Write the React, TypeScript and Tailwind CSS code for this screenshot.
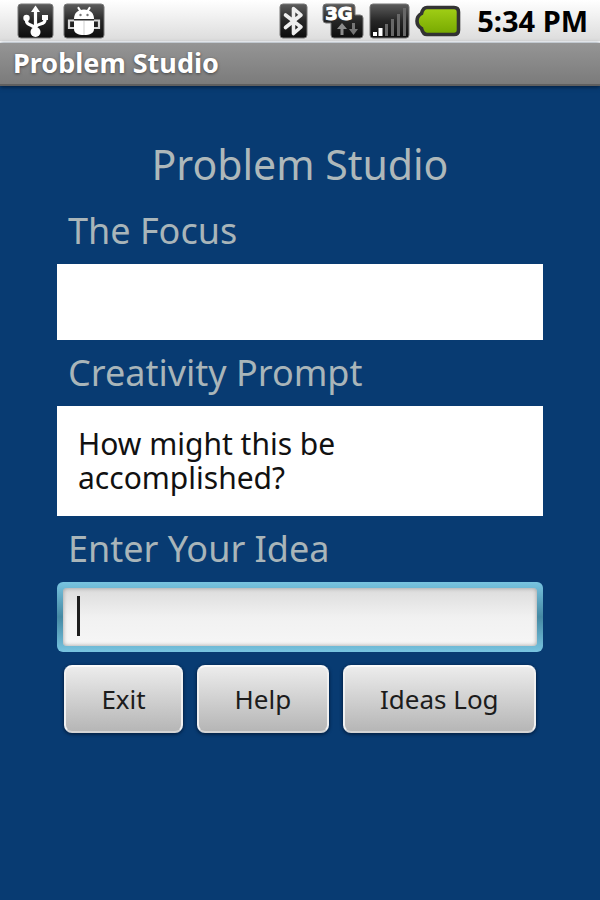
import type { ReactNode } from "react";
import { useState } from "react";

function UsbIcon() {
  return (
    <svg width="38" height="36" viewBox="0 0 38 36" aria-hidden="true">
      <rect x="1" y="1" width="35" height="34" rx="3" fill="url(#tile)" stroke="#777" />
      <g fill="none" stroke="#fff" strokeWidth="3.2" strokeLinecap="round" strokeLinejoin="round">
        <path d="M18.500 7v23" />
        <path d="M9.500 15v3c0 5 7 3 9 8" />
        <path d="M28 14v3c0 5-7 3-9.500 7" />
      </g>
      <path d="M18.500 2.500l4.500 6.500h-9z" fill="#fff" />
      <circle cx="9.500" cy="15" r="3.200" fill="#fff" />
      <rect x="25" y="12" width="6" height="5" fill="#fff" />
      <circle cx="18.500" cy="29" r="5" fill="#fff" />
    </svg>
  );
}

function AndroidIcon() {
  return (
    <svg width="42" height="36" viewBox="0 0 42 36" aria-hidden="true">
      <rect x="1" y="1" width="40" height="34" rx="3" fill="url(#tile)" stroke="#777" />
      <path d="M15.500 5l2.500 4M26.500 5L24 9" stroke="#fff" strokeWidth="2.2" strokeLinecap="round" />
      <path d="M11 16c0-6 4-9.500 10-9.500S31 10 31 16z" fill="#fff" />
      <path d="M11 17.500h20V26c0 4-4 6-10 6s-10-2-10-6z" fill="#fff" />
      <path d="M21 18v14" stroke="#cfcfcf" />
      <path d="M11 17.500H6v7.500h5M31 17.500h5V25h-5" fill="none" stroke="#d6d6d6" strokeWidth="2.2" />
      <circle cx="17.500" cy="12" r="1.200" fill="#777" />
      <circle cx="24.500" cy="12" r="1.200" fill="#777" />
    </svg>
  );
}

function BluetoothIcon() {
  return (
    <svg width="30" height="36" viewBox="0 0 30 36" aria-hidden="true">
      <rect x="1" y="1" width="27" height="34" rx="3" fill="url(#tile)" stroke="#777" />
      <path d="M6.500 12L22 24l-7.500 6.500V5.500L22 12 6.500 24.500" fill="none" stroke="#eee" strokeWidth="3.600" strokeLinejoin="round" strokeLinecap="round" />
    </svg>
  );
}

function NetworkIcon() {
  return (
    <svg width="42" height="36" viewBox="0 0 42 36" role="img" aria-label="3G network">
      <path d="M4 1h26q3 0 3 3v8h5q3 0 3 3v17q0 3-3 3H12q-3 0-3-3V20H4q-3 0-3-3V4q0-3 3-3z" fill="url(#tile)" stroke="#777" />
      <text x="17" y="17" textAnchor="middle" fill="#fff" stroke="#fff" fontFamily="DejaVu Sans, sans-serif" fontWeight="700" fontSize="18">
        3G
      </text>
      <path d="M18.500 32v-6h-3.500l5-6 5 6h-3.500v6z" fill="#8d8d8d" />
      <path d="M30 20v6h-3l4.500 6 4.500-6h-3v-6z" fill="#757575" />
    </svg>
  );
}

function SignalIcon() {
  return (
    <svg width="41" height="36" viewBox="0 0 41 36" aria-hidden="true">
      <rect x="1" y="1" width="39" height="34" rx="3" fill="url(#tile)" stroke="#777" />
      <path d="M4 29h4v4H4zM9.500 25h4v8h-4z" fill="#fff" />
      <path d="M16 21h3v12h-3zM22 16h3v17h-3zM28 11h3v22h-3zM34 5h3v28h-3z" fill="#686868" />
    </svg>
  );
}

function BatteryIcon() {
  return (
    <svg width="46" height="32" viewBox="0 0 46 32" aria-hidden="true">
      <path
        d="M12 2.500h27q4.500 0 4.500 4.500v18q0 4.500-4.500 4.500H12q-4 0-5.500-6Q2 21 2 16t4.500-7.500q1.500-6 5.500-6z"
        fill="url(#charge)"
        stroke="#333"
        strokeWidth="3.600"
      />
    </svg>
  );
}

function StatusBar() {
  return (
    <header className="flex h-[43px] items-center justify-between border-b-2 border-white bg-linear-to-b from-white to-[#dcdcdc] pr-3 pl-[17px]">
      <svg width="0" height="0" className="absolute" aria-hidden="true">
        <defs>
          <linearGradient id="tile" x1="0" y1="0" x2="0" y2="1">
            <stop offset="0" stopColor="#5c5c5c" />
            <stop offset="0.500" stopColor="#262626" />
            <stop offset="1" stopColor="#0c0c0c" />
          </linearGradient>
          <linearGradient id="charge" x1="0" y1="0" x2="0" y2="1">
            <stop offset="0" stopColor="#a2d016" />
            <stop offset="1" stopColor="#76a800" />
          </linearGradient>
        </defs>
      </svg>
      <div className="flex items-center gap-2">
        <UsbIcon />
        <AndroidIcon />
      </div>
      <div className="flex items-center gap-4">
        <div className="flex items-center gap-[5px]">
          <div className="pr-2">
            <BluetoothIcon />
          </div>
          <NetworkIcon />
          <SignalIcon />
          <BatteryIcon />
        </div>
        <time className="text-[29px] font-bold text-black">5:34 PM</time>
      </div>
    </header>
  );
}

function Label({ children, htmlFor }: { children: ReactNode; htmlFor: string }) {
  return (
    <label htmlFor={htmlFor} className="block px-[11px] py-[11px] text-[36px] leading-[44px] text-[#a9b5b9]">
      {children}
    </label>
  );
}

function Button({ children }: { children: ReactNode }) {
  return (
    <button
      type="button"
      className="h-[68px] flex-auto rounded-lg border-2 border-t-[#fafafa] border-r-[#f0f0f0] border-b-[#d4d4d4] border-l-[#f0f0f0] bg-linear-to-b from-[#ececec] to-[#b6b6b6] text-[26px] text-[#1c1c1c] shadow-[0_1px_3px_1px_#04244a]"
    >
      {children}
    </button>
  );
}

export default function App() {
  const [idea, setIdea] = useState("");

  return (
    <div className="flex min-h-screen flex-col bg-[#083b72] font-['Noto_Sans',sans-serif]">
      <StatusBar />
      <div className="h-[43px] border-b-2 border-[#5f5f5f] bg-linear-to-b from-[#959595] to-[#7b7b7b] px-[13px] text-[27px] leading-[40px] font-bold text-white shadow-[0_1px_4px_#021d3c] [text-shadow:0_1px_3px_#444]">
        Problem Studio
      </div>

      <main className="px-[57px] pt-[54px]">
        <h1 className="text-center text-[41px] leading-[48px] text-[#aeb8ba]">Problem Studio</h1>

        <form className="pt-[10px]">
          <Label htmlFor="focus">The Focus</Label>
          <output id="focus" className="block h-[76px] bg-white" />

          <Label htmlFor="prompt">Creativity Prompt</Label>
          <output id="prompt" className="block bg-white px-[21px] py-[21px] text-[30px] leading-[34px] text-[#111]">
            How might this be accomplished?
          </output>

          <Label htmlFor="idea">Enter Your Idea</Label>
          <div className="relative rounded-md bg-linear-to-b from-[#78c4e0] via-[#4589a3] to-[#78c4e0] p-[6px]">
            <input
              id="idea"
              value={idea}
              onChange={(e) => setIdea(e.target.value)}
              className="block h-[58px] w-full rounded-sm bg-linear-to-b from-[#dcdcdc] via-[#f1f1f1] to-[#f6f6f6] px-4 text-[30px] text-[#111] caret-transparent shadow-[inset_0_0_4px_#999] outline-none"
            />
            {idea === "" && <span className="pointer-events-none absolute top-[14px] left-5 h-10 w-[3px] bg-[#1c1c1c]" />}
          </div>

          <div className="flex gap-[14px] px-[7px] pt-[13px]">
            <Button>Exit</Button>
            <Button>Help</Button>
            <Button>Ideas Log</Button>
          </div>
        </form>
      </main>
    </div>
  );
}
